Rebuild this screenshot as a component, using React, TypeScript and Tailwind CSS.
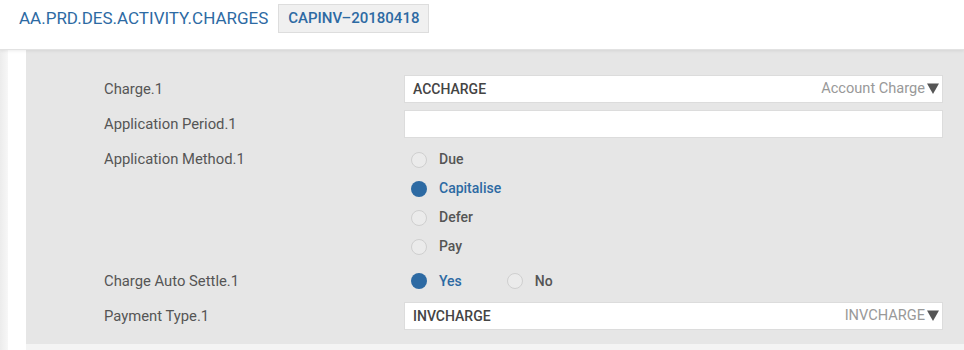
import React from 'react';

// Charges activity form (AA.PRD.DES.ACTIVITY.CHARGES)

type Option = { label: string; checked?: boolean };

function Radio({ label, checked = false }: Option) {
  return (
    <label className="flex items-center gap-[12px] cursor-pointer">
      {checked ? (
        <span className="block h-[16px] w-[16px] rounded-full bg-[#2d6aa3]" />
      ) : (
        <span className="block h-[16px] w-[16px] rounded-full border border-[#cfcfcf] bg-[#ebebeb]" />
      )}
      <span
        className={`text-[14px] font-medium ${checked ? 'text-[#2d6aa3]' : 'text-[#555555]'}`}
      >
        {label}
      </span>
    </label>
  );
}

function SelectBox({ value, hint }: { value: string; hint: string }) {
  return (
    <div className="flex h-[28px] items-center justify-between border border-[#dcdcdc] bg-white pl-[8px] pr-[3px]">
      <span className="text-[14px] font-medium text-[#444444]">{value}</span>
      <span className="flex items-center text-[14.6px] text-[#999999]">
        {hint}
        <svg width="12" height="11" viewBox="0 0 12 11" className="ml-[2px]">
          <path d="M0 0.5 H12 L6 11 Z" fill="#555555" />
        </svg>
      </span>
    </div>
  );
}

function Label({ children, h = 28 }: { children: React.ReactNode; h?: number }) {
  return (
    <div
      className={`flex w-[300px] shrink-0 items-center pt-[1px] text-[14.8px] text-[#555555] ${h === 29 ? 'h-[29px]' : 'h-[28px]'}`}
    >
      {children}
    </div>
  );
}

export default function App() {
  const methods: Option[] = [
    { label: 'Due' },
    { label: 'Capitalise', checked: true },
    { label: 'Defer' },
    { label: 'Pay' },
  ];

  return (
    <div
      className="h-[350px] w-[964px] overflow-hidden bg-white"
      style={{ fontFamily: 'Roboto, "Noto Sans", sans-serif' }}
    >
      {/* Header */}
      <div className="relative z-10 h-[50px] border-b border-[#e2e2e2] bg-white pt-[4px] shadow-[0_1px_3px_rgba(0,0,0,0.08)]">
        <div className="flex h-[29px] items-center">
          <div className="ml-[19px] text-[17px] text-[#2d6aa3]">AA.PRD.DES.ACTIVITY.CHARGES</div>
          <div className="ml-[10px] flex h-[29px] items-center border border-[#dddddd] bg-[#f0f0f0] px-[9px] text-[15px] font-medium text-[#2d6aa3]">
            CAPINV–20180418
          </div>
        </div>
      </div>

      {/* Body */}
      <div className="flex h-[300px]">
        <div className="w-[8px] bg-gradient-to-r from-[#ececec] to-[#f7f7f7]" />
        <div className="w-[18px] bg-white" />
        <div className="flex flex-1 flex-col bg-[#f4f4f4]">
          <div className="flex flex-col bg-[#e6e6e6] pb-[14px] pl-[78px] pr-[21px] pt-[25px]">
            <div className="flex">
              <Label>Charge.1</Label>
              <div className="flex-1">
                <SelectBox value="ACCHARGE" hint="Account Charge" />
              </div>
            </div>

            <div className="mt-[7px] flex">
              <Label>Application Period.1</Label>
              <div className="h-[28px] flex-1 border border-[#dcdcdc] bg-white" />
            </div>

            <div className="mt-[6px] flex">
              <Label h={29}>Application Method.1</Label>
              <div className="flex flex-col pl-[7px] pt-[1px]">
                {methods.map((m) => (
                  <div key={m.label} className="flex h-[29px] items-center">
                    <Radio {...m} />
                  </div>
                ))}
              </div>
            </div>

            <div className="mt-[6px] flex">
              <Label>Charge Auto Settle.1</Label>
              <div className="flex h-[28px] items-center gap-[45px] pl-[7px]">
                <Radio label="Yes" checked />
                <Radio label="No" />
              </div>
            </div>

            <div className="mt-[7px] flex">
              <Label>Payment Type.1</Label>
              <div className="flex-1">
                <SelectBox value="INVCHARGE" hint="INVCHARGE" />
              </div>
            </div>
          </div>
        </div>
      </div>
    </div>
  );
}
